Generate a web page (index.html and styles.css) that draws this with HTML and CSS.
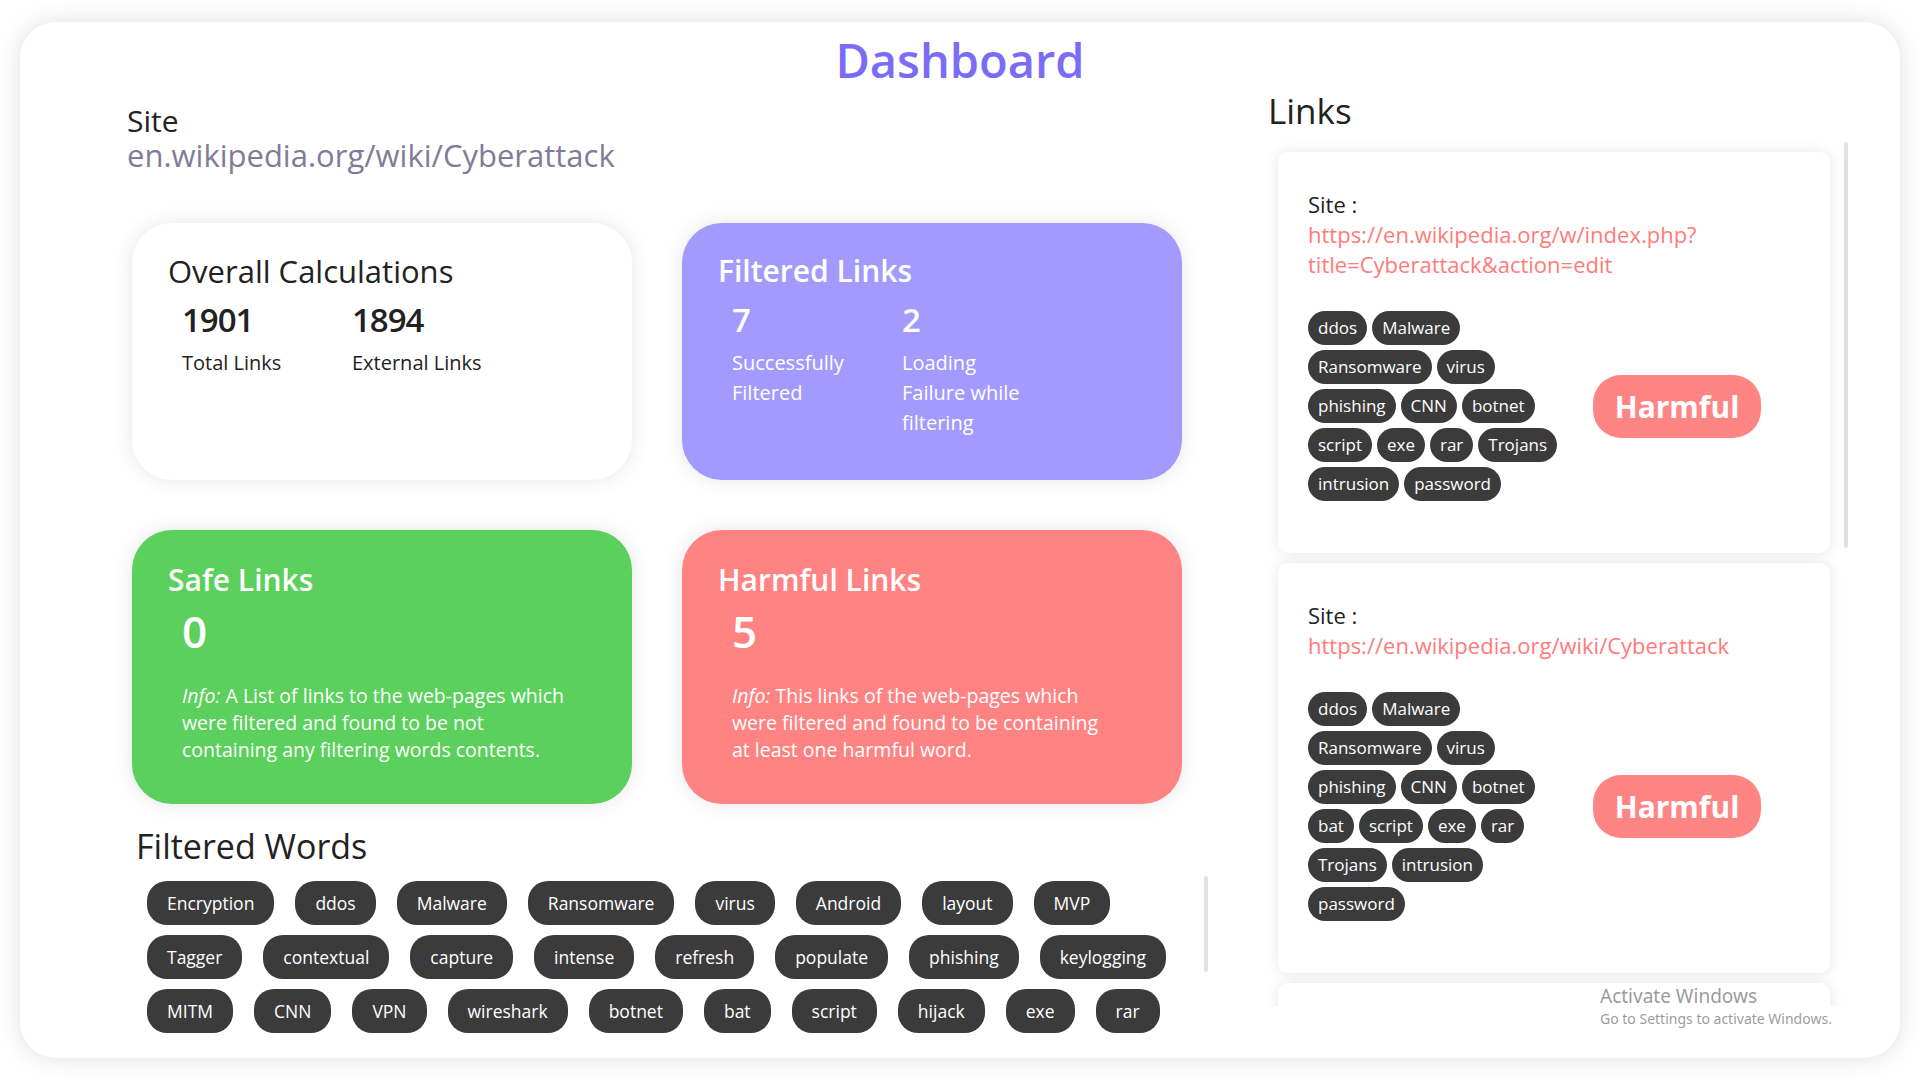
FILE: index.html
```html
<!DOCTYPE html>
<html lang="en">
<head>
<meta charset="utf-8">
<title>Dashboard</title>
<link rel="stylesheet" href="styles.css">
</head>
<body>
<div class="frame">
  <h1 class="title">Dashboard</h1>
  <div class="columns">
    <main class="main">
      <div class="site-label">Site</div>
      <div class="site-url">en.wikipedia.org/wiki/Cyberattack</div>

      <div class="cards">
        <section class="card card-white">
          <h2 class="card-title">Overall Calculations</h2>
          <div class="stats">
            <div class="stat">
              <div class="stat-num">1901</div>
              <div class="stat-label">Total Links</div>
            </div>
            <div class="stat">
              <div class="stat-num">1894</div>
              <div class="stat-label">External Links</div>
            </div>
          </div>
        </section>

        <section class="card card-purple">
          <h2 class="card-title bold">Filtered Links</h2>
          <div class="stats">
            <div class="stat">
              <div class="stat-num">7</div>
              <div class="stat-label">Successfully<br>Filtered</div>
            </div>
            <div class="stat">
              <div class="stat-num">2</div>
              <div class="stat-label">Loading<br>Failure while<br>filtering</div>
            </div>
          </div>
        </section>

        <section class="card card-green card-lg">
          <h2 class="card-title bold">Safe Links</h2>
          <div class="big-num">0</div>
          <p class="info"><em>Info:</em> A List of links to the web-pages which<br>were filtered and found to be not<br>containing any filtering words contents.</p>
        </section>

        <section class="card card-red card-lg">
          <h2 class="card-title bold">Harmful Links</h2>
          <div class="big-num">5</div>
          <p class="info"><em>Info:</em> This links of the web-pages which<br>were filtered and found to be containing<br>at least one harmful word.</p>
        </section>
      </div>

      <h2 class="section-title">Filtered Words</h2>
      <div class="words-panel">
        <div class="words">
          <span class="chip">Encryption</span>
          <span class="chip">ddos</span>
          <span class="chip">Malware</span>
          <span class="chip">Ransomware</span>
          <span class="chip">virus</span>
          <span class="chip">Android</span>
          <span class="chip">layout</span>
          <span class="chip">MVP</span>
          <span class="chip">Tagger</span>
          <span class="chip">contextual</span>
          <span class="chip">capture</span>
          <span class="chip">intense</span>
          <span class="chip">refresh</span>
          <span class="chip">populate</span>
          <span class="chip">phishing</span>
          <span class="chip">keylogging</span>
          <span class="chip">MITM</span>
          <span class="chip">CNN</span>
          <span class="chip">VPN</span>
          <span class="chip">wireshark</span>
          <span class="chip">botnet</span>
          <span class="chip">bat</span>
          <span class="chip">script</span>
          <span class="chip">hijack</span>
          <span class="chip">exe</span>
          <span class="chip">rar</span>
        </div>
        <div class="thumb thumb-words"></div>
      </div>
    </main>

    <aside class="side">
      <h2 class="side-title">Links</h2>
      <div class="links-panel">
        <div class="links-list">
          <article class="link-card">
            <div class="link-site">Site :</div>
            <div class="link-url">https://en.wikipedia.org/w/index.php?<br>title=Cyberattack&amp;action=edit</div>
            <div class="link-body">
              <div class="tags">
                <span class="tag">ddos</span>
                <span class="tag">Malware</span>
                <span class="tag">Ransomware</span>
                <span class="tag">virus</span>
                <span class="tag">phishing</span>
                <span class="tag">CNN</span>
                <span class="tag">botnet</span>
                <span class="tag">script</span>
                <span class="tag">exe</span>
                <span class="tag">rar</span>
                <span class="tag">Trojans</span>
                <span class="tag">intrusion</span>
                <span class="tag">password</span>
              </div>
              <div class="verdict"><span class="pill">Harmful</span></div>
            </div>
          </article>

          <article class="link-card">
            <div class="link-site">Site :</div>
            <div class="link-url">https://en.wikipedia.org/wiki/Cyberattack</div>
            <div class="link-body">
              <div class="tags">
                <span class="tag">ddos</span>
                <span class="tag">Malware</span>
                <span class="tag">Ransomware</span>
                <span class="tag">virus</span>
                <span class="tag">phishing</span>
                <span class="tag">CNN</span>
                <span class="tag">botnet</span>
                <span class="tag">bat</span>
                <span class="tag">script</span>
                <span class="tag">exe</span>
                <span class="tag">rar</span>
                <span class="tag">Trojans</span>
                <span class="tag">intrusion</span>
                <span class="tag">password</span>
              </div>
              <div class="verdict"><span class="pill">Harmful</span></div>
            </div>
          </article>

          <article class="link-card link-card-next"></article>
        </div>
        <div class="thumb thumb-links"></div>
      </div>
    </aside>
  </div>

  <div class="watermark">
    <div class="wm-title">Activate Windows</div>
    <div class="wm-sub">Go to Settings to activate Windows.</div>
  </div>
</div>
</body>
</html>
```

FILE: styles.css
```css
* {
  box-sizing: border-box;
}

html, body {
  margin: 0;
  padding: 0;
  background: #ffffff;
}

body {
  width: 1920px;
  height: 1080px;
  overflow: hidden;
  font-family: "Open Sans", "Noto Sans", sans-serif;
  color: #222222;
}

.frame {
  position: relative;
  margin: 22px 20px 0 20px;
  height: 1036px;
  border-radius: 36px;
  background: #ffffff;
  box-shadow: 0 0 24px rgba(0, 0, 0, 0.13);
  padding-top: 10px;
}

.title {
  margin: 0;
  text-align: center;
  font-size: 47px;
  line-height: 56px;
  font-weight: 600;
  color: #7a6cf6;
}

.columns {
  display: flex;
  padding-left: 107px;
}

.main {
  width: 1100px;
  flex-shrink: 0;
}

.site-label {
  margin-top: 15px;
  font-size: 30px;
  line-height: 35px;
  color: #222222;
}

.site-url {
  font-size: 31px;
  line-height: 35px;
  color: #7f7c98;
}

.cards {
  display: grid;
  grid-template-columns: 500px 500px;
  grid-template-rows: 257px 274px;
  gap: 50px;
  margin: 50px 0 0 5px;
}

.card {
  border-radius: 40px;
  box-shadow: 0 0 20px rgba(0, 0, 0, 0.1);
  padding: 29px 30px 0 36px;
}

.card-lg {
  padding-top: 31px;
}

.card-white {
  background: #ffffff;
  color: #222222;
}

.card-purple {
  background: #a29bfd;
  color: #ffffff;
}

.card-green {
  background: #5bd05c;
  color: #ffffff;
}

.card-red {
  background: #ff8383;
  color: #ffffff;
}

.card-title {
  margin: 0;
  font-size: 31px;
  line-height: 38px;
  font-weight: 400;
}

.card-title.bold {
  font-size: 30px;
  font-weight: 600;
}

.stats {
  display: flex;
  gap: 20px;
  margin-top: 10px;
  padding-left: 14px;
}

.stat {
  width: 150px;
}

.stat-num {
  font-size: 33px;
  line-height: 40px;
  font-weight: 600;
  letter-spacing: -1px;
}

.stat-label {
  margin-top: 8px;
  font-size: 20px;
  line-height: 30px;
}

.big-num {
  margin-top: 6px;
  padding-left: 14px;
  font-size: 44px;
  line-height: 52px;
  font-weight: 600;
}

.info {
  margin: 25px 0 0 0;
  padding-left: 14px;
  font-size: 19.5px;
  line-height: 27px;
}

.info em {
  font-style: italic;
}

.section-title {
  margin: 22px 0 0 9px;
  font-size: 34px;
  line-height: 40px;
  font-weight: 400;
  color: #222222;
}

.words-panel {
  position: relative;
  margin: 10px 0 0 15px;
  width: 1066px;
  height: 170px;
  overflow: hidden;
}

.words {
  display: flex;
  flex-wrap: wrap;
  gap: 10px 21px;
  padding: 5px 10px 0 5px;
}

.chip {
  display: inline-block;
  height: 44px;
  padding: 0 20px;
  border-radius: 20px;
  background: #3b3b3b;
  color: #ffffff;
  font-size: 17.5px;
  line-height: 44px;
  white-space: nowrap;
}

.thumb {
  position: absolute;
  top: 0;
  right: 0;
  width: 4px;
  border-radius: 2px;
  background: #e1e1e1;
}

.thumb-words {
  height: 96px;
}

.thumb-links {
  height: 406px;
}

.side {
  margin-left: 41px;
  width: 580px;
  flex-shrink: 0;
}

.side-title {
  margin: 2px 0 0 0;
  font-size: 35px;
  line-height: 42px;
  font-weight: 400;
  color: #222222;
}

.links-panel {
  position: relative;
  margin-top: 10px;
  width: 580px;
  height: 864px;
}

.links-list {
  height: 100%;
  overflow: hidden;
  display: flex;
  flex-direction: column;
  gap: 10px;
  padding: 10px 18px 10px 10px;
}

.link-card {
  flex-shrink: 0;
  background: #ffffff;
  border-radius: 10px;
  box-shadow: 0 0 14px rgba(0, 0, 0, 0.1);
  padding: 37px 54px 52px 30px;
}

.link-card-next {
  min-height: 200px;
}

.link-site {
  font-size: 22px;
  line-height: 30px;
  color: #222222;
}

.link-url {
  font-size: 22px;
  line-height: 30px;
  color: #ff7b7b;
}

.link-body {
  display: flex;
  align-items: center;
  margin-top: 32px;
}

.tags {
  width: 270px;
  flex-shrink: 0;
  display: flex;
  flex-wrap: wrap;
  gap: 5px;
}

.tag {
  display: inline-block;
  height: 34px;
  padding: 0 10px;
  border-radius: 17px;
  background: #3b3b3b;
  color: #ffffff;
  font-size: 17px;
  line-height: 34px;
  white-space: nowrap;
}

.verdict {
  flex: 1;
  display: flex;
  justify-content: center;
}

.pill {
  display: inline-block;
  height: 63px;
  padding: 0 22px;
  border-radius: 28px;
  background: #ff8585;
  color: #ffffff;
  font-size: 30px;
  line-height: 63px;
  font-weight: 700;
}

.watermark {
  position: absolute;
  left: 1580px;
  top: 962px;
  color: rgba(120, 120, 120, 0.75);
  font-family: "Noto Sans", "Open Sans", sans-serif;
}

.wm-title {
  font-size: 19px;
  line-height: 24px;
}

.wm-sub {
  font-size: 14px;
  line-height: 18px;
  margin-top: 2px;
}
```
